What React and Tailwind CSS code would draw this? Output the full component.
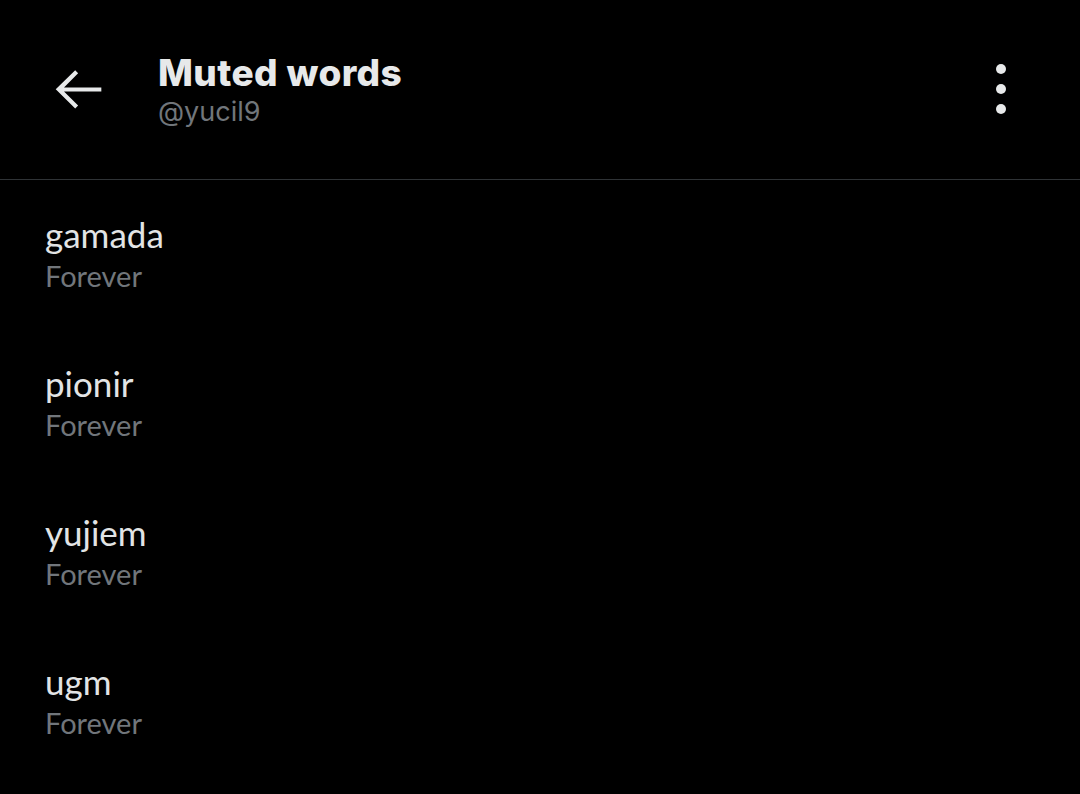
import React from "react";

const words = ["gamada", "pionir", "yujiem", "ugm"];

export default function App() {
  return (
    <div className="w-[1080px] h-[794px] bg-black overflow-hidden" style={{ fontFamily: "Inter, 'Noto Sans', sans-serif" }}>
      <div className="h-[180px] flex items-center pl-[48px] pr-[74px] border-b border-[#2f3336]">
        <svg width="64" height="64" viewBox="0 0 24 24" className="text-[#e7e9ea] -mt-[2px]">
          <path d="M20 11.4H6l5.3-5.3-1.1-1.1L2.9 12.1l7.3 7.2 1.1-1.1L6 12.9h14v-1.5z" fill="currentColor" />
        </svg>
        <div className="ml-[46px] flex flex-col mt-[2px]">
          <div className="text-[37px] leading-[42px] font-extrabold text-[#e7e9ea] tracking-[0.4px]">Muted words</div>
          <div className="text-[27px] leading-[36px] text-[#71767b]">@yucil9</div>
        </div>
        <div className="ml-auto flex flex-col gap-[10px] -mt-[2px]">
          <span className="w-[10px] h-[10px] rounded-full bg-[#e7e9ea]" />
          <span className="w-[10px] h-[10px] rounded-full bg-[#e7e9ea]" />
          <span className="w-[10px] h-[10px] rounded-full bg-[#e7e9ea]" />
        </div>
      </div>
      <div className="flex flex-col pt-[32px]" style={{ fontFamily: "Lato, 'Noto Sans', sans-serif" }}>
        {words.map((w) => (
          <div key={w} className="h-[149px] pl-[45px] flex flex-col">
            <div className="text-[35px] leading-[44px] text-[#e2e4e5]">{w}</div>
            <div className="text-[29px] leading-[40px] text-[#71767b]">Forever</div>
          </div>
        ))}
      </div>
    </div>
  );
}
